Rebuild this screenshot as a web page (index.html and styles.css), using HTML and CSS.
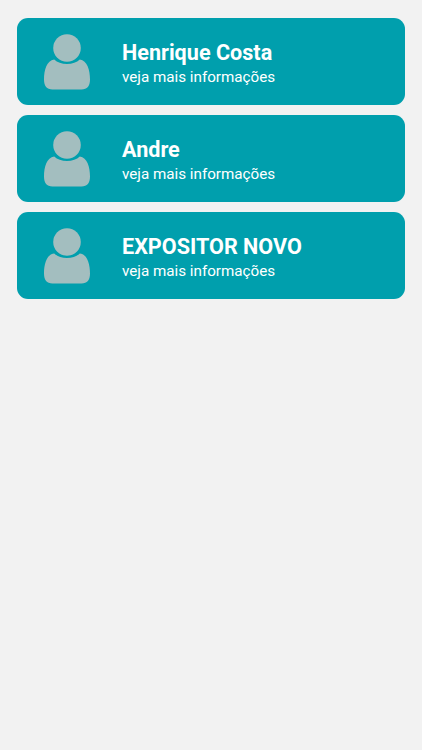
FILE: index.html
```
<!DOCTYPE html>
<html lang="pt-BR">
<head>
    <meta charset="UTF-8">
    <meta name="viewport" content="width=device-width, initial-scale=1.0">
    <title>Expositores</title>
    <link rel="stylesheet" href="styles.css">
</head>
<body>
    <!-- User icon shared by every card -->
    <svg class="sprite" width="0" height="0">
        <symbol id="user" viewBox="0 0 46 56">
            <circle cx="23" cy="14" r="13.8"/>
            <path d="M10.2 25.4 C13.2 28.3 17.8 29.9 23 29.9 C28.2 29.9 32.8 28.3 35.8 25.4 C43.2 26.2 46 36 46 45.5 C46 52 43.3 55.4 37.5 55.4 H8.5 C2.7 55.4 0 52 0 45.5 C0 36 2.8 26.2 10.2 25.4 Z"/>
        </symbol>
    </svg>

    <div class="list">
        <a class="card">
            <svg class="avatar"><use href="#user"/></svg>
            <div class="info">
                <h2>Henrique Costa</h2>
                <p>veja mais informações</p>
            </div>
        </a>
        <a class="card">
            <svg class="avatar"><use href="#user"/></svg>
            <div class="info">
                <h2>Andre</h2>
                <p>veja mais informações</p>
            </div>
        </a>
        <a class="card">
            <svg class="avatar"><use href="#user"/></svg>
            <div class="info">
                <h2>EXPOSITOR NOVO</h2>
                <p>veja mais informações</p>
            </div>
        </a>
    </div>
</body>
</html>
```
FILE: styles.css
```
body {
    margin: 0;
    min-height: 100vh;
    background: #f2f2f2;
    font-family: Roboto, sans-serif;
}

.sprite {
    display: block;
}

.list {
    display: flex;
    flex-direction: column;
    gap: 10.8px;
    padding: 18.4px 17.3px;
}

.card {
    display: flex;
    align-items: center;
    box-sizing: border-box;
    height: 86.2px;
    padding-left: 26.7px;
    border-radius: 11px;
    background: #009fad;
    color: #fff;
    cursor: pointer;
}

.avatar {
    width: 46px;
    height: 56px;
    margin-top: 1px;
    margin-right: 32px;
    fill: #a3bebf;
}

.info {
    padding-top: 6px;
}

.info h2 {
    margin: 0;
    font-size: 21.6px;
    line-height: 26px;
    font-weight: 700;
}

.info p {
    margin: 0;
    font-size: 15.2px;
    line-height: 22px;
}
```
